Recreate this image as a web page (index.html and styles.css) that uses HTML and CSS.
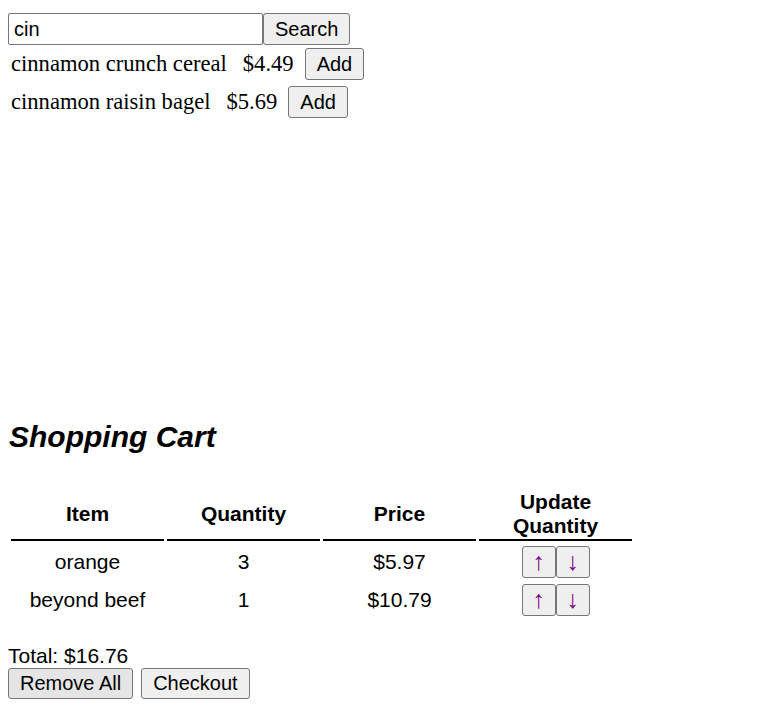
FILE: index.html
```html
<!DOCTYPE html>
<html>
<head>
<meta charset="utf-8">
<link rel="stylesheet" href="styles.css">
</head>
<body>
<div class="search">
  <div class="search-bar">
    <input class="search-input" type="text" value="cin">
    <button class="btn">Search</button>
  </div>
  <div class="results">
    <div class="result"><span class="name">cinnamon crunch cereal</span><span class="price">$4.49</span><button class="btn">Add</button></div>
    <div class="result"><span class="name">cinnamon raisin bagel</span><span class="price">$5.69</span><button class="btn">Add</button></div>
  </div>
</div>
<div class="cart">
  <h2 class="cart-title">Shopping Cart</h2>
  <table class="cart-table">
    <thead>
      <tr><th>Item</th><th>Quantity</th><th>Price</th><th>Update<br>Quantity</th></tr>
    </thead>
    <tbody>
      <tr><td>orange</td><td>3</td><td>$5.97</td><td><button class="arrow">↑</button><button class="arrow">↓</button></td></tr>
      <tr><td>beyond beef</td><td>1</td><td>$10.79</td><td><button class="arrow">↑</button><button class="arrow">↓</button></td></tr>
    </tbody>
  </table>
  <div class="total">Total: $16.76</div>
  <div class="actions">
    <button class="btn btn-active">Remove All</button>
    <button class="btn">Checkout</button>
  </div>
</div>
</body>
</html>
```
FILE: styles.css
```css
body {
  margin: 13px 8px 8px 8px;
  font-family: "Liberation Sans", Arial, sans-serif;
  font-size: 21px;
  color: #000;
  background: #fff;
}
.search-bar {
  display: flex;
  height: 32px;
}
.search-input {
  box-sizing: border-box;
  width: 255px;
  height: 32px;
  margin: 0;
  padding: 1px 5px;
  border: 1px solid #767676;
  border-radius: 2px;
  font-family: "Liberation Sans", Arial, sans-serif;
  font-size: 20px;
}
.btn {
  box-sizing: border-box;
  height: 32px;
  margin: 0;
  padding: 1px 11px;
  border: 1px solid #767676;
  border-radius: 3px;
  background: #efefef;
  font-family: "Liberation Sans", Arial, sans-serif;
  font-size: 20px;
  color: #000;
}
.btn-active {
  background: #e5e5e5;
}
.results {
  height: 372px;
  padding-top: 3px;
}
.result {
  display: flex;
  align-items: center;
  height: 32px;
  margin-bottom: 6px;
  padding-left: 3px;
  font-family: "Liberation Serif", "Times New Roman", serif;
  font-size: 22.6px;
}
.result .name {
  margin-right: 16px;
}
.result .price {
  margin-right: 11px;
}
.cart-title {
  margin: 0;
  font-size: 30px;
  font-style: italic;
  font-weight: bold;
  line-height: 34px;
  padding-left: 1px;
}
.cart-title + .cart-table {
  margin-top: 32px;
}
.cart-table {
  border-spacing: 3px;
  border-collapse: separate;
  table-layout: fixed;
  width: 627px;
}
.cart-table th {
  font-size: 21px;
  font-weight: bold;
  text-align: center;
  border-bottom: 2px solid #000;
  padding: 1px;
  line-height: 24px;
  height: 48px;
}
.cart-table td {
  text-align: center;
  padding: 1px;
  height: 33px;
  line-height: 24px;
}
.arrow {
  box-sizing: border-box;
  width: 34px;
  height: 32px;
  margin: 0;
  padding: 0;
  border: 1px solid #767676;
  border-radius: 3px;
  background: #efefef;
  color: #800080;
  font-family: "Liberation Sans", Arial, sans-serif;
  font-size: 25px;
  vertical-align: middle;
}
.total {
  margin-top: 23px;
  line-height: 25px;
}
.actions {
  display: flex;
  gap: 8px;
}
.actions .btn {
  height: 31px;
}
```
